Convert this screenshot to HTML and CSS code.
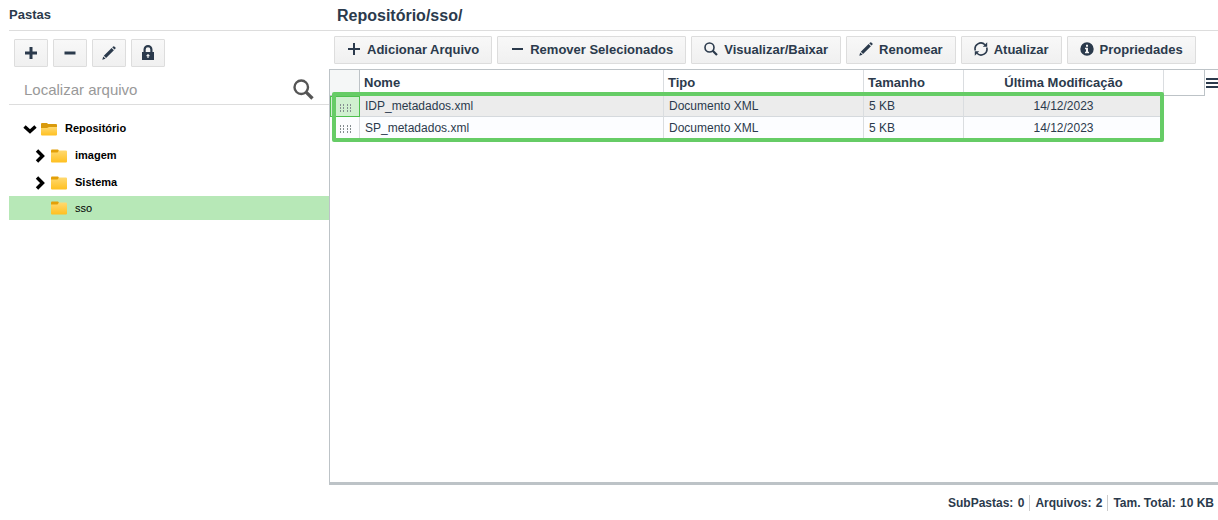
FILE: index.html
```html
<!DOCTYPE html>
<html lang="pt-BR">
<head>
  <meta charset="UTF-8">
  <title>Repositório</title>
  <link rel="stylesheet" href="styles.css">
</head>
<body>

  <svg class="sprite" aria-hidden="true">
    <symbol id="i-plus" viewBox="0 0 14 14"><path d="M6 1h2v5h5v2H8v5H6V8H1V6h5z"/></symbol>
    <symbol id="i-plus-bold" viewBox="0 0 14 14"><path d="M5.500 1h3v4.500H13v3H8.500V13h-3V8.500H1v-3h4.500z"/></symbol>
    <symbol id="i-minus" viewBox="0 0 14 14"><path d="M2 6h11v2H2z"/></symbol>
    <symbol id="i-minus-bold" viewBox="0 0 14 14"><path d="M1.500 5.500h11v3h-11z"/></symbol>
    <symbol id="i-pencil" viewBox="0 0 14 14"><path d="M.3 13.700l.9-3.300 2.400 2.400zM1.800 9.700L9.600 1.900l2.300 2.300L4.100 12zM10.200 1.300l1-.9q.6-.4 1.100 0l1.200 1.200q.4.5 0 1l-1 1z"/></symbol>
    <symbol id="i-lock" viewBox="0 0 14 16"><path fill-rule="evenodd" d="M2.500 7V4.500a4.500 4.500 0 0 1 9 0V7H13v8H1V7zM4.700 7h4.600V4.500a2.300 2.300 0 0 0-4.600 0zM6.400 9v1H5.500v1.200h.9V13h1.200v-1.800h.9V10h-.9V9z"/></symbol>
    <symbol id="i-search" viewBox="0 0 14 14"><circle cx="5.500" cy="5.500" r="4.500" fill="none" stroke="currentColor" stroke-width="1.600"/><path d="M8.700 8.700l4.300 4.300" fill="none" stroke="currentColor" stroke-width="2.200"/></symbol>
    <symbol id="i-refresh" viewBox="0 0 14 14"><path fill="none" stroke="currentColor" stroke-width="1.600" d="M1.300 8.500A5.800 5.800 0 0 1 11 2.800M12.700 5.500A5.800 5.800 0 0 1 3 11.200"/><path d="M13.200 .3v4.400H8.800zM.8 13.700V9.300h4.400z"/></symbol>
    <symbol id="i-info" viewBox="0 0 14 14"><path fill-rule="evenodd" d="M7 .3a6.700 6.700 0 1 0 0 13.400A6.700 6.700 0 0 0 7 .3zM6 2.800h2v2H6zM5 5.800h3v4h1v1.500H5V9.800h1V7.300H5z"/></symbol>
    <symbol id="i-right" viewBox="0 0 14 14"><path d="M4 1.500L9.500 7 4 12.500" fill="none" stroke="currentColor" stroke-width="3.400"/></symbol>
    <symbol id="i-down" viewBox="0 0 14 14"><path d="M1.500 4.500L7 9.500l5.500-5" fill="none" stroke="currentColor" stroke-width="3.400"/></symbol>
    <linearGradient id="amber" x1="0" y1="0" x2="0" y2="1">
      <stop offset="0" stop-color="#ffd970"/>
      <stop offset="1" stop-color="#ffc020"/>
    </linearGradient>
    <symbol id="i-folder" viewBox="0 0 16 14"><path fill="#e3a008" d="M0 1.500q0-1 1-1h6l1 1v3H0z"/><path fill="url(#amber)" d="M0 3.500h6.500L8 1.500h7q1 0 1 1v10q0 1-1 1H1q-1 0-1-1z"/></symbol>
    <symbol id="i-folder-open" viewBox="0 0 16 14"><path fill="#d99a0c" d="M0 2q0-1 1-1h5l1 1h8q1 0 1 1v5H0z"/><path fill="url(#amber)" d="M0 6h6l2-1h8v7.500q0 1-1 1H1q-1 0-1-1z"/></symbol>
    <symbol id="i-grip" viewBox="0 0 11 9"><path fill="none" stroke="#858d90" stroke-width="1" stroke-dasharray="2 1" d="M.5 0v8M3.500 0v8M7.500 0v8M10.500 0v8"/></symbol>
  </svg>

  <aside class="sidebar">
    <h2 class="sidebar-title">Pastas</h2>
    <div class="folder-tools">
      <button class="btn" aria-label="Adicionar pasta"><svg class="icon"><use href="#i-plus-bold"/></svg></button>
      <button class="btn" aria-label="Remover pasta"><svg class="icon"><use href="#i-minus-bold"/></svg></button>
      <button class="btn" aria-label="Renomear pasta"><svg class="icon"><use href="#i-pencil"/></svg></button>
      <button class="btn" aria-label="Permissões"><svg class="icon lock"><use href="#i-lock"/></svg></button>
    </div>
    <div class="search">
      <input type="text" placeholder="Localizar arquivo" aria-label="Localizar arquivo">
      <button aria-label="Localizar"><svg class="icon"><use href="#i-search"/></svg></button>
    </div>
    <ul class="tree">
      <li class="node root"><svg class="arrow"><use href="#i-down"/></svg><svg class="folder"><use href="#i-folder-open"/></svg><span>Repositório</span></li>
      <li class="node"><svg class="arrow"><use href="#i-right"/></svg><svg class="folder"><use href="#i-folder"/></svg><span>imagem</span></li>
      <li class="node"><svg class="arrow"><use href="#i-right"/></svg><svg class="folder"><use href="#i-folder"/></svg><span>Sistema</span></li>
      <li class="node selected"><svg class="arrow"></svg><svg class="folder"><use href="#i-folder"/></svg><span>sso</span></li>
    </ul>
  </aside>

  <main class="content">
    <h1 class="path">Repositório/sso/</h1>
    <div class="toolbar">
      <button class="btn"><svg class="icon"><use href="#i-plus"/></svg>Adicionar Arquivo</button>
      <button class="btn"><svg class="icon"><use href="#i-minus"/></svg>Remover Selecionados</button>
      <button class="btn"><svg class="icon"><use href="#i-search"/></svg>Visualizar/Baixar</button>
      <button class="btn"><svg class="icon"><use href="#i-pencil"/></svg>Renomear</button>
      <button class="btn"><svg class="icon"><use href="#i-refresh"/></svg>Atualizar</button>
      <button class="btn"><svg class="icon"><use href="#i-info"/></svg>Propriedades</button>
    </div>

    <div class="grid">
      <table>
        <colgroup>
          <col class="c-grip"><col class="c-name"><col class="c-type"><col class="c-size"><col class="c-date"><col><col class="c-menu">
        </colgroup>
        <thead>
          <tr>
            <th class="grip"></th>
            <th>Nome</th>
            <th>Tipo</th>
            <th>Tamanho</th>
            <th class="date">Última Modificação</th>
            <th class="filler"></th>
            <th class="menu"><button aria-label="Colunas"></button></th>
          </tr>
        </thead>
        <tbody>
          <tr class="active">
            <td class="grip"><svg><use href="#i-grip"/></svg></td>
            <td>IDP_metadados.xml</td>
            <td>Documento XML</td>
            <td>5 KB</td>
            <td class="date">14/12/2023</td>
          </tr>
          <tr>
            <td class="grip"><svg><use href="#i-grip"/></svg></td>
            <td>SP_metadados.xml</td>
            <td>Documento XML</td>
            <td>5 KB</td>
            <td class="date">14/12/2023</td>
          </tr>
        </tbody>
      </table>
      <div class="highlight"></div>
    </div>

    <footer class="status">
      <span>SubPastas: <b>0</b></span>
      <span>Arquivos: <b>2</b></span>
      <span>Tam. Total: <b>10 KB</b></span>
    </footer>
  </main>

</body>
</html>
```
FILE: styles.css
```css
* { box-sizing: border-box; }
html, body { height: 100%; margin: 0; }
body {
  display: flex;
  padding-left: 9px;
  background: #fff;
  color: #2b3a4c;
  font-family: "Liberation Sans", Arial, sans-serif;
  font-size: 12px;
}
h1, h2 { margin: 0; height: 31px; border-bottom: 1px solid #ddd; }
button, input { font-family: inherit; color: inherit; }
.sprite { position: absolute; width: 0; height: 0; }
.icon { width: 14px; height: 14px; fill: currentColor; flex: none; }

.btn {
  display: flex;
  align-items: center;
  justify-content: center;
  gap: 6px;
  height: 28px;
  padding: 0 12px;
  border: 1px solid #ddd;
  border-radius: 1px;
  background: linear-gradient(#f8f8f8, #f0f0f0);
  font-size: 13px;
  font-weight: bold;
  white-space: nowrap;
}

/* pastas */
.sidebar { width: 320px; flex: none; }
.sidebar-title { font-size: 13px; line-height: 29px; }
.folder-tools { display: flex; gap: 5px; padding: 8px 5px; }
.folder-tools .btn { width: 34px; padding: 0; }
.icon.lock { height: 16px; }
.search {
  display: flex;
  align-items: center;
  height: 30px;
  padding: 0 15px;
  border-bottom: 1px solid #ddd;
}
.search input { flex: 1; min-width: 0; padding: 0; border: 0; background: none; font-size: 15px; }
.search input::placeholder { color: #999; }
.search button { padding: 0; border: 0; background: none; color: #555; }
.search .icon { display: block; width: 21px; height: 21px; }

.tree { margin: 0; padding: 10px 0 0; list-style: none; color: #000; font-size: 11px; font-weight: bold; }
.node { display: flex; align-items: center; height: 27px; padding-left: 24px; line-height: 12px; }
.node span { padding-bottom: 1px; }
.node.root { padding-left: 14px; }
.node.selected { height: 24px; background: #b7e8b7; font-weight: normal; }
.arrow { width: 14px; height: 14px; margin-right: 4px; }
.folder { width: 16px; height: 14px; margin-right: 8px; }

/* arquivos */
.content { flex: 1; min-width: 0; display: flex; flex-direction: column; }
.path { padding-left: 8px; font-size: 16px; line-height: 32px; }
.toolbar { display: flex; gap: 5px; padding: 5px; }
.toolbar .btn { padding-bottom: 2px; }
.grid {
  position: relative;
  flex: 1;
  border: 1px solid #bdc3c7;
  border-right: 0;
  border-bottom-width: 3px;
}
table { width: 100%; table-layout: fixed; border-collapse: separate; border-spacing: 0; }
.c-grip { width: 30px; }
.c-name { width: 304px; }
.c-type, .c-date { width: 200px; }
.c-size { width: 100px; }
.c-menu { width: 13px; }
th {
  height: 26px;
  padding: 0 4px;
  border-right: 1px solid #dadde0;
  border-bottom: 1px solid #bdc3c7;
  font-size: 13px;
  text-align: left;
}
td { height: 21px; padding: 0 5px; border-right: 1px solid #dadde0; background: #fcfdff; line-height: 18px; }
.date { text-align: center; }
.active td { background: #ececec; border-bottom: 1px solid #d5d9dd; }
th.grip { background: #f5f7f7; border-right-color: #bdc3c7; }
td.grip { padding: 0 10px; }
td.grip svg { display: block; width: 11px; height: 9px; margin-top: 3px; }
.active td.grip { background: #d0f0d0; border: 1px solid #4fc04f; padding-left: 9px; }
th.filler { border-right-color: #bdc3c7; }
th.menu { padding: 0 0 0 1px; border: 0; }
.menu button {
  display: block;
  width: 12px;
  height: 10px;
  padding: 0;
  border: 0;
  background: repeating-linear-gradient(#2b3a4c 0 2px, #fff 2px 4px);
}
.highlight {
  position: absolute;
  top: 22px;
  left: 2px;
  width: 832px;
  height: 50px;
  border: 4px solid #66cc66;
  border-radius: 2px;
}

.status { display: flex; justify-content: flex-end; align-items: center; height: 35px; padding-right: 4px; font-weight: bold; }
.status span { line-height: 16px; }
.status span + span { margin-left: 5px; padding-left: 5px; border-left: 1px solid #ccc; }
.status b { margin-left: 1px; }
```
